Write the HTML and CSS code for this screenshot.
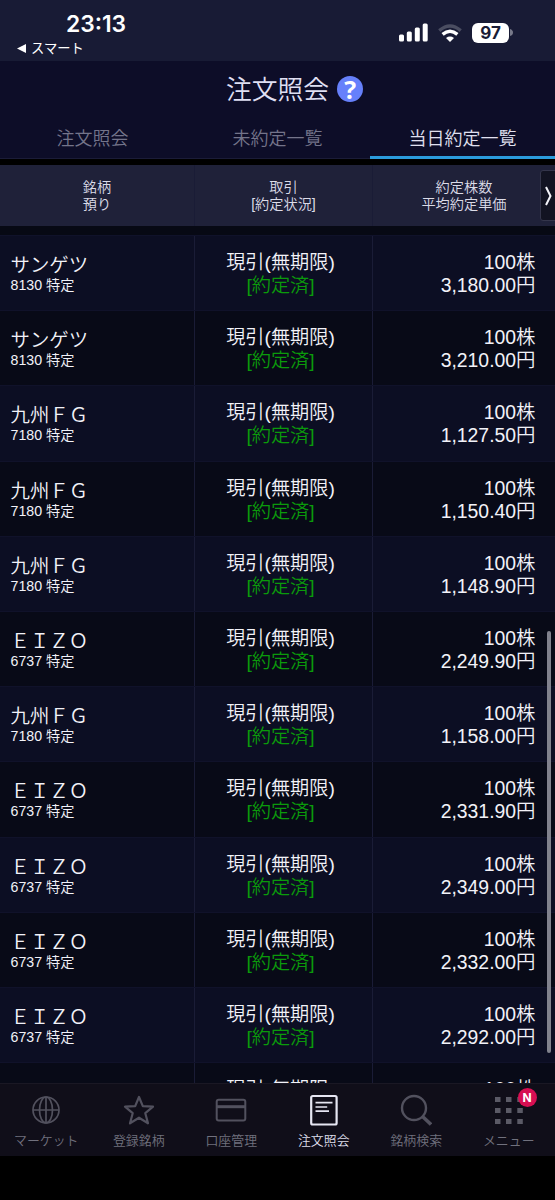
FILE: index.html
```html
<!DOCTYPE html>
<html lang="ja">

<head>
    <title>注文照会</title>
    <meta charset="utf-8">
    <meta name="viewport" content="width=device-width, initial-scale=1.0">
    <link rel="stylesheet" href="styles.css">
</head>

<body>

    <div class="statusbar">
        <div class="clock">
            <div class="time">23:13</div>
            <div class="back"><svg width="9" height="9" viewBox="0 0 9 9"><path d="M0 4.5L9 0v9z" fill="#fff"/></svg>スマート</div>
        </div>
        <div class="status-icons">
            <svg class="signal" width="29" height="19" viewBox="0 0 29 19" fill="#fff">
                <rect x="0" y="11.5" width="5" height="7" rx="1.5"/>
                <rect x="7.8" y="8.5" width="5" height="10" rx="1.5"/>
                <rect x="15.8" y="4.5" width="5" height="14" rx="1.5"/>
                <rect x="23.7" y="0.5" width="5" height="18" rx="1.5"/>
            </svg>
            <svg class="wifi" width="24" height="18" viewBox="0 0 24 18" fill="none" stroke="#fff" stroke-width="3.4">
                <path d="M1.3 6.6Q12-2.8 22.7 6.6" stroke="#4a4d61"/>
                <path d="M4.6 10.4Q12 4 19.4 10.4"/>
                <path d="M12 18L8 13.9Q12 11 16 13.9z" fill="#fff" stroke="none"/>
            </svg>
            <div class="battery">97</div>
            <svg class="battery-tip" width="3" height="7" viewBox="0 0 3 7"><path d="M0 0Q3 1 3 3.5T0 7z" fill="#777989"/></svg>
        </div>
    </div>

    <header>
        <h1>注文照会 <span class="help">?</span></h1>
        <nav class="tabs">
            <a>注文照会</a>
            <a>未約定一覧</a>
            <a class="valgt">当日約定一覧</a>
        </nav>
    </header>

    <div class="row thead">
        <div>銘柄<br>預り</div>
        <div>取引<br>[約定状況]</div>
        <div>約定株数<br>平均約定単価</div>
        <button class="next">
            <svg width="7" height="20" viewBox="0 0 7 20" fill="none" stroke="#f2f2f8" stroke-width="2"><path d="M1 1L5.5 10L1 19"/></svg>
        </button>
    </div>

    <template>
        <article class="row">
            <div class="stock">
                <h2></h2>
                <p class="code"></p>
            </div>
            <div class="trade">
                <p>現引(無期限)</p>
                <p class="done">[約定済]</p>
            </div>
            <div class="price">
                <p>100株</p>
                <p class="yen"></p>
            </div>
        </article>
    </template>
    <main>
        <section class="list"></section>
        <article class="row">
            <div class="stock"></div>
            <div class="trade">現引(無期限)</div>
            <div class="price">100株</div>
        </article>
        <div class="scrollbar"></div>
    </main>

    <footer>
        <a>
            <svg width="30" height="32" viewBox="0 0 30 32" fill="none" stroke="#52515e" stroke-width="1.7">
                <circle cx="15" cy="16" r="13"/>
                <ellipse cx="15" cy="16" rx="6.5" ry="13"/>
                <path d="M15 3v26M2 16h26"/>
            </svg>
            マーケット
        </a>
        <a>
            <svg width="32" height="32" viewBox="0 0 32 32" fill="none" stroke="#52515e" stroke-width="2.2" stroke-linejoin="round">
                <path d="M16 3L19.8 12.2L30 12.7L22.3 19.2L25 29.3L16 23.7L7 29.3L9.7 19.2L2 12.7L12.2 12.2z"/>
            </svg>
            登録銘柄
        </a>
        <a>
            <svg width="32" height="32" viewBox="0 0 32 32" fill="none" stroke="#52515e" stroke-width="2">
                <rect x="1.7" y="5.8" width="28.6" height="20.6" rx="2"/>
                <path d="M2 12.7h28" stroke-width="3"/>
            </svg>
            口座管理
        </a>
        <a class="valgt">
            <svg width="30" height="32" viewBox="0 0 30 32" fill="none" stroke="#e6e6f2" stroke-width="2.2">
                <rect x="2.2" y="2" width="25.4" height="28.5" rx="1.5"/>
                <path d="M6.5 8.7h17M6.5 13h11.7M6.5 17.2h13.5" stroke-width="1.7"/>
            </svg>
            注文照会
        </a>
        <a>
            <svg width="32" height="32" viewBox="0 0 32 32" fill="none" stroke="#52515e" stroke-width="2.4">
                <circle cx="14" cy="14" r="12"/>
                <path d="M22.5 22.5L31 30.5" stroke-width="3.6"/>
            </svg>
            銘柄検索
        </a>
        <a class="menu">
            <svg width="28" height="32" viewBox="0 0 28 32" fill="#5b5a66">
                <path d="M0 3h5.5v5h-5.5zM11 3h5.5v5h-5.5zM22.3 3h5.5v5h-5.5zM0 14h5.5v5h-5.5zM11 14h5.5v5h-5.5zM22.3 14h5.5v5h-5.5zM0 25h5.5v5h-5.5zM11 25h5.5v5h-5.5zM22.3 25h5.5v5h-5.5z"/>
            </svg>
            メニュー
            <span class="badge">N</span>
        </a>
    </footer>

    <script>
        const liste = [
            ["サンゲツ", "8130", "3,180.00"],
            ["サンゲツ", "8130", "3,210.00"],
            ["九州ＦＧ", "7180", "1,127.50"],
            ["九州ＦＧ", "7180", "1,150.40"],
            ["九州ＦＧ", "7180", "1,148.90"],
            ["ＥＩＺＯ", "6737", "2,249.90"],
            ["九州ＦＧ", "7180", "1,158.00"],
            ["ＥＩＺＯ", "6737", "2,331.90"],
            ["ＥＩＺＯ", "6737", "2,349.00"],
            ["ＥＩＺＯ", "6737", "2,332.00"],
            ["ＥＩＺＯ", "6737", "2,292.00"]
        ];
        const dest = document.querySelector(".list");
        const temp = document.querySelector("template");

        liste.forEach(([navn, kode, pris]) => {
            const klon = temp.cloneNode(true).content;
            klon.querySelector("h2").textContent = navn;
            klon.querySelector(".code").textContent = kode + " 特定";
            klon.querySelector(".yen").textContent = pris + "円";
            dest.appendChild(klon);
        });
    </script>
</body>

</html>
```
FILE: styles.css
```css
* {
    box-sizing: border-box;
}

body {
    margin: 0;
    height: 1200px;
    display: flex;
    flex-direction: column;
    overflow: hidden;
    background-color: #000;
    color: #f2f2f8;
    font-family: "Liberation Sans", "Noto Sans CJK JP", sans-serif;
    font-weight: 350;
}

h1, h2, p {
    margin: 0;
    font-weight: 350;
}

svg {
    display: block;
}

/* STATUS */

.statusbar {
    height: 61px;
    flex: none;
    display: flex;
    justify-content: space-between;
    background-color: #181b35;
    color: #fff;
}

.clock {
    padding: 10px 0 0 17px;
}

.time {
    padding-left: 49px;
    font: 600 22.8px/28px Inter, sans-serif;
}

.back {
    display: flex;
    align-items: center;
    gap: 5px;
    font-size: 13.3px;
    font-weight: 400;
    line-height: 21px;
}

.status-icons {
    display: flex;
    align-items: center;
    padding: 4px 42px 0 0;
}

.wifi {
    margin: 0 10px;
}

.battery {
    width: 37px;
    height: 20px;
    border-radius: 6px;
    background-color: #fff;
    color: #181b35;
    text-align: center;
    font: 700 17px/20px Inter, sans-serif;
}

.battery-tip {
    margin-left: 1px;
}

/* HEADER */

header {
    flex: none;
    height: 98px;
    background-color: #0d0d28;
}

h1 {
    display: flex;
    justify-content: center;
    align-items: center;
    gap: 8px;
    height: 57px;
    padding: 0 0 4px 34px;
    font-size: 25.8px;
    color: #dfdff2;
}

.help {
    width: 26px;
    height: 26px;
    margin-top: 3px;
    border-radius: 50%;
    background-color: #6680fb;
    color: #fff;
    text-align: center;
    font: 700 25px/26px "Open Sans", sans-serif;
}

.tabs {
    display: flex;
    height: 41px;
}

.tabs a {
    flex: 1;
    text-align: center;
    font-size: 18px;
    line-height: 43px;
    color: #74748a;
    border-bottom: 1px solid #1b1c38;
}

.tabs .valgt {
    color: #e0e0f0;
    border-bottom: 3px solid #2b9bdc;
}

/* TABLE */

.row {
    display: grid;
    grid-template-columns: 195px 178px 182px;
}

.row > div {
    border-right: 1px solid #1a1c36;
}

.row > div:nth-child(3) {
    border-right: 0;
}

.thead {
    flex: none;
    position: relative;
    height: 61px;
    margin-top: 6px;
    background-color: #1f2139;
    color: #dcdce8;
    font-size: 14.2px;
    line-height: 17px;
    text-align: center;
}

.thead > div {
    padding-top: 14px;
}

.next {
    position: absolute;
    right: -3px;
    top: 5px;
    width: 18px;
    height: 51px;
    padding: 0 0 0 4px;
    border: 1px solid #34354b;
    border-radius: 3px;
    background-color: #121322;
}

main {
    flex: none;
    position: relative;
    height: 857px;
    overflow: hidden;
    background-color: #070914;
}

.list {
    margin-top: 9px;
}

article {
    height: 75.2px;
    background-color: #080a17;
    border-top: 1px solid #10122a;
}

.list article:nth-child(odd) {
    background-color: #0c0e23;
}

article > div {
    padding-top: 15px;
    font-size: 19.2px;
    line-height: 23px;
}

.stock {
    padding: 18px 0 0 10.5px;
}

h2 {
    font-size: 19.4px;
    line-height: 23px;
}

.code {
    font-size: 14.2px;
    line-height: 17px;
}

.trade {
    text-align: center;
    padding-right: 6px;
}

.done {
    color: #0b9a0b;
}

.price {
    text-align: right;
    padding-right: 19.5px;
    font-size: 19.4px;
}

.scrollbar {
    position: absolute;
    right: 4px;
    top: 405px;
    width: 4px;
    height: 422px;
    border-radius: 2px;
    background-color: #81828d;
}

/* BOTTOM MENU */

footer {
    flex: none;
    display: grid;
    grid-template-columns: repeat(6, 1fr);
    height: 73px;
    background-color: #100e19;
    border-top: 1px solid #1a1824;
}

footer a {
    position: relative;
    display: flex;
    flex-direction: column;
    align-items: center;
    gap: 5px;
    padding-top: 10px;
    font-size: 12.9px;
    line-height: 20px;
    color: #71717e;
}

footer .valgt {
    color: #dedeea;
}

.badge {
    position: absolute;
    left: 55px;
    top: 4px;
    width: 19px;
    height: 19px;
    border-radius: 50%;
    background-color: #d70f52;
    color: #fff;
    text-align: center;
    font: 700 12px/19px Inter, sans-serif;
}
```
